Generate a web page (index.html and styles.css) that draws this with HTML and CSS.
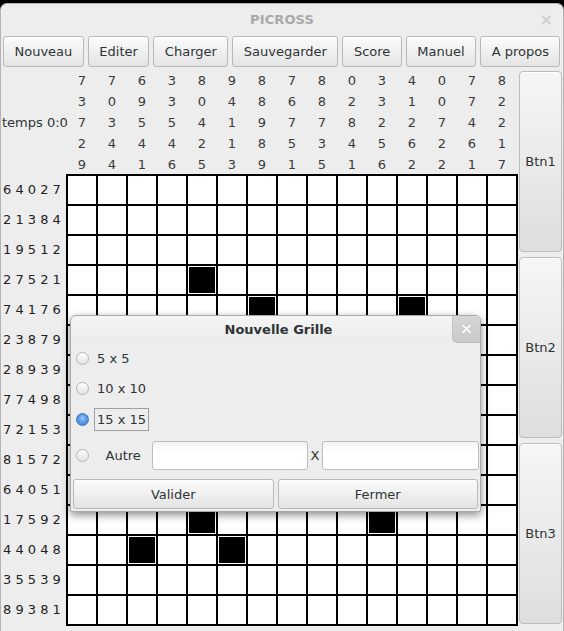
FILE: index.html
```html
<!DOCTYPE html>
<html lang="fr">
<head>
<meta charset="utf-8">
<title>PICROSS</title>
<link rel="stylesheet" href="styles.css">
</head>
<body>
<div class="window">
  <div class="titlebar">
    <span class="title">PICROSS</span>
    <span class="wclose">×</span>
  </div>
  <div class="toolbar">
    <button class="btn">Nouveau</button>
    <button class="btn">Editer</button>
    <button class="btn">Charger</button>
    <button class="btn">Sauvegarder</button>
    <button class="btn">Score</button>
    <button class="btn">Manuel</button>
    <button class="btn">A propos</button>
  </div>
  <div class="main">
    <div class="board">
      <div class="timer">temps 0:0</div>
      <div class="colclues">
        <span>7</span><span>7</span><span>6</span><span>3</span><span>8</span><span>9</span><span>8</span><span>7</span><span>8</span><span>0</span><span>3</span><span>4</span><span>0</span><span>7</span><span>8</span>
        <span>3</span><span>0</span><span>9</span><span>3</span><span>0</span><span>4</span><span>8</span><span>6</span><span>8</span><span>2</span><span>3</span><span>1</span><span>0</span><span>7</span><span>2</span>
        <span>7</span><span>3</span><span>5</span><span>5</span><span>4</span><span>1</span><span>9</span><span>7</span><span>7</span><span>8</span><span>2</span><span>2</span><span>7</span><span>4</span><span>2</span>
        <span>2</span><span>4</span><span>4</span><span>4</span><span>2</span><span>1</span><span>8</span><span>5</span><span>3</span><span>4</span><span>5</span><span>6</span><span>2</span><span>6</span><span>1</span>
        <span>9</span><span>4</span><span>1</span><span>6</span><span>5</span><span>3</span><span>9</span><span>1</span><span>5</span><span>1</span><span>6</span><span>2</span><span>2</span><span>1</span><span>7</span>
      </div>
      <div class="rowclues">
        <div>6 4 0 2 7</div>
        <div>2 1 3 8 4</div>
        <div>1 9 5 1 2</div>
        <div>2 7 5 2 1</div>
        <div>7 4 1 7 6</div>
        <div>2 3 8 7 9</div>
        <div>2 8 9 3 9</div>
        <div>7 7 4 9 8</div>
        <div>7 2 1 5 3</div>
        <div>8 1 5 7 2</div>
        <div>6 4 0 5 1</div>
        <div>1 7 5 9 2</div>
        <div>4 4 0 4 8</div>
        <div>3 5 5 3 9</div>
        <div>8 9 3 8 1</div>
      </div>
      <div class="grid">
        <span class="c"></span><span class="c"></span><span class="c"></span><span class="c"></span><span class="c"></span><span class="c"></span><span class="c"></span><span class="c"></span><span class="c"></span><span class="c"></span><span class="c"></span><span class="c"></span><span class="c"></span><span class="c"></span><span class="c"></span>
        <span class="c"></span><span class="c"></span><span class="c"></span><span class="c"></span><span class="c"></span><span class="c"></span><span class="c"></span><span class="c"></span><span class="c"></span><span class="c"></span><span class="c"></span><span class="c"></span><span class="c"></span><span class="c"></span><span class="c"></span>
        <span class="c"></span><span class="c"></span><span class="c"></span><span class="c"></span><span class="c"></span><span class="c"></span><span class="c"></span><span class="c"></span><span class="c"></span><span class="c"></span><span class="c"></span><span class="c"></span><span class="c"></span><span class="c"></span><span class="c"></span>
        <span class="c"></span><span class="c"></span><span class="c"></span><span class="c"></span><span class="c on"></span><span class="c"></span><span class="c"></span><span class="c"></span><span class="c"></span><span class="c"></span><span class="c"></span><span class="c"></span><span class="c"></span><span class="c"></span><span class="c"></span>
        <span class="c"></span><span class="c"></span><span class="c"></span><span class="c"></span><span class="c"></span><span class="c"></span><span class="c on"></span><span class="c"></span><span class="c"></span><span class="c"></span><span class="c"></span><span class="c on"></span><span class="c"></span><span class="c"></span><span class="c"></span>
        <span class="c"></span><span class="c"></span><span class="c"></span><span class="c"></span><span class="c"></span><span class="c"></span><span class="c"></span><span class="c"></span><span class="c"></span><span class="c"></span><span class="c"></span><span class="c"></span><span class="c"></span><span class="c"></span><span class="c"></span>
        <span class="c"></span><span class="c"></span><span class="c"></span><span class="c"></span><span class="c"></span><span class="c"></span><span class="c"></span><span class="c"></span><span class="c"></span><span class="c"></span><span class="c"></span><span class="c"></span><span class="c"></span><span class="c"></span><span class="c"></span>
        <span class="c"></span><span class="c"></span><span class="c"></span><span class="c"></span><span class="c"></span><span class="c"></span><span class="c"></span><span class="c"></span><span class="c"></span><span class="c"></span><span class="c"></span><span class="c"></span><span class="c"></span><span class="c"></span><span class="c"></span>
        <span class="c"></span><span class="c"></span><span class="c"></span><span class="c"></span><span class="c"></span><span class="c"></span><span class="c"></span><span class="c"></span><span class="c"></span><span class="c"></span><span class="c"></span><span class="c"></span><span class="c"></span><span class="c"></span><span class="c"></span>
        <span class="c"></span><span class="c"></span><span class="c"></span><span class="c"></span><span class="c"></span><span class="c"></span><span class="c"></span><span class="c"></span><span class="c"></span><span class="c"></span><span class="c"></span><span class="c"></span><span class="c"></span><span class="c"></span><span class="c"></span>
        <span class="c"></span><span class="c"></span><span class="c"></span><span class="c"></span><span class="c"></span><span class="c"></span><span class="c"></span><span class="c"></span><span class="c"></span><span class="c"></span><span class="c"></span><span class="c"></span><span class="c"></span><span class="c"></span><span class="c"></span>
        <span class="c"></span><span class="c"></span><span class="c"></span><span class="c"></span><span class="c on"></span><span class="c"></span><span class="c"></span><span class="c"></span><span class="c"></span><span class="c"></span><span class="c on"></span><span class="c"></span><span class="c"></span><span class="c"></span><span class="c"></span>
        <span class="c"></span><span class="c"></span><span class="c on"></span><span class="c"></span><span class="c"></span><span class="c on"></span><span class="c"></span><span class="c"></span><span class="c"></span><span class="c"></span><span class="c"></span><span class="c"></span><span class="c"></span><span class="c"></span><span class="c"></span>
        <span class="c"></span><span class="c"></span><span class="c"></span><span class="c"></span><span class="c"></span><span class="c"></span><span class="c"></span><span class="c"></span><span class="c"></span><span class="c"></span><span class="c"></span><span class="c"></span><span class="c"></span><span class="c"></span><span class="c"></span>
        <span class="c"></span><span class="c"></span><span class="c"></span><span class="c"></span><span class="c"></span><span class="c"></span><span class="c"></span><span class="c"></span><span class="c"></span><span class="c"></span><span class="c"></span><span class="c"></span><span class="c"></span><span class="c"></span><span class="c"></span>
      </div>
    </div>
    <div class="side">
      <button class="sbtn">Btn1</button>
      <button class="sbtn">Btn2</button>
      <button class="sbtn">Btn3</button>
    </div>
  </div>
</div>

<div class="dialog">
  <div class="dtitle">Nouvelle Grille<span class="dclose">×</span></div>
  <div class="dbody">
    <div class="opt"><span class="radio"></span><span class="olabel">5 x 5</span></div>
    <div class="opt"><span class="radio"></span><span class="olabel">10 x 10</span></div>
    <div class="opt"><span class="radio checked"></span><span class="olabel focus">15 x 15</span></div>
    <div class="other">
      <span class="radio"></span>
      <span class="otext">Autre</span>
      <span class="field f1"></span>
      <span class="xsep">X</span>
      <span class="field f2"></span>
    </div>
    <div class="dbuttons">
      <button class="btn dbtn">Valider</button>
      <button class="btn dbtn">Fermer</button>
    </div>
  </div>
</div>
</body>
</html>
```

FILE: styles.css
```css
* {
  box-sizing: border-box;
}

html, body {
  margin: 0;
  padding: 0;
  background: #000;
  width: 564px;
  height: 631px;
  overflow: hidden;
  font-family: "DejaVu Sans", sans-serif;
  font-size: 13px;
  color: #2e3436;
}

.window {
  margin-top: 3px;
  height: 628px;
  background: #ededed;
  border: 1px solid #b4b4b4;
  border-bottom: none;
  border-radius: 7px 7px 0 0;
  overflow: hidden;
}

.titlebar {
  height: 30px;
  display: flex;
  align-items: center;
  justify-content: center;
  position: relative;
}

.title {
  font-weight: bold;
  font-size: 13px;
  color: #a9a9a9;
  letter-spacing: 0.1px;
}

.wclose {
  position: absolute;
  right: 10px;
  top: 6px;
  font-size: 16px;
  font-weight: bold;
  color: #cfcfcf;
}

.toolbar {
  display: flex;
  gap: 4px;
  padding: 2px 0 0 2px;
}

.btn {
  height: 31px;
  padding: 0 10.5px;
  font-family: "DejaVu Sans", sans-serif;
  font-size: 13px;
  color: #2e3436;
  border: 1px solid #b9b9b9;
  border-radius: 3px;
  background: linear-gradient(#fbfbfb, #e4e4e4);
  box-shadow: inset 0 1px 0 #fff;
}

.main {
  display: flex;
}

.board {
  display: grid;
  grid-template-columns: 65px 452px;
  grid-template-rows: 107px 452px;
}

.timer {
  padding: 45px 0 0 1px;
  line-height: 21px;
  white-space: nowrap;
}

.colclues {
  display: grid;
  grid-template-columns: repeat(15, 30px);
  grid-auto-rows: 21px;
  padding: 3px 0 0 1px;
  line-height: 21px;
  justify-items: center;
  color: #3b3b3b;
}

.rowclues {
  padding: 1px 0 0 2px;
}

.rowclues div {
  height: 30px;
  line-height: 30px;
  white-space: nowrap;
  color: #222;
}

.grid {
  display: grid;
  grid-template-columns: repeat(15, 30px);
  grid-auto-rows: 30px;
  border: 1px solid #000;
  background: #fff;
}

.c {
  border: 1px solid #000;
  background: #fff;
}

.c.on {
  background: #000;
  box-shadow: inset 0 0 0 1px #fff;
}

.side {
  display: flex;
  flex-direction: column;
  gap: 5px;
  padding-top: 4px;
  margin-left: 1px;
}

.sbtn {
  width: 43px;
  height: 181px;
  padding: 0;
  font-family: "DejaVu Sans", sans-serif;
  font-size: 13px;
  color: #2e3436;
  border: 1px solid #bcbcbc;
  border-radius: 4px;
  background: linear-gradient(#f6f6f6, #dedede);
  box-shadow: inset 0 1px 0 #fff;
}

/* dialog */
.dialog {
  position: absolute;
  left: 70px;
  top: 315px;
  width: 411px;
  background: #ededed;
  border: 1px solid #a9a9a9;
  border-radius: 6px 6px 2px 2px;
  box-shadow: 0 3px 9px rgba(0, 0, 0, 0.45);
}

.dtitle {
  position: relative;
  height: 27px;
  line-height: 28px;
  text-align: center;
  font-weight: bold;
  padding-left: 6px;
  color: #2e3436;
  border-radius: 6px 6px 0 0;
  background: linear-gradient(#f4f4f4, #ececec);
}

.dclose {
  position: absolute;
  right: 0;
  top: 0;
  width: 28px;
  height: 27px;
  line-height: 25px;
  text-align: center;
  font-size: 16px;
  font-weight: bold;
  color: #fff;
  text-shadow: 0 0 1px #9a9a9a;
  background: linear-gradient(#d6d6d6, #c9c9c9);
  border-left: 1px solid #c2c2c2;
  border-bottom: 1px solid #bdbdbd;
  border-radius: 0 5px 0 5px;
}

.dbody {
  display: flex;
  flex-direction: column;
  padding: 0 0 2px 0;
}

.opt {
  height: 30.5px;
  display: flex;
  align-items: center;
  padding-left: 5px;
}

.radio {
  width: 13px;
  height: 13px;
  flex: 0 0 13px;
  border-radius: 50%;
  border: 1px solid #b3b3b3;
  background: linear-gradient(#ffffff, #e2e2e2);
}

.radio.checked {
  border-color: #3a77c0;
  background: radial-gradient(circle at 50% 40%, #9cc6f3 0, #5b9be4 45%, #3d7dd0 100%);
}

.olabel {
  margin-left: 5px;
  padding: 0 2px;
  border: 1px solid transparent;
  line-height: 21px;
}

.olabel.focus {
  border-color: #a0a0a0;
}

.other {
  display: flex;
  align-items: center;
  height: 29px;
  margin-top: 6.5px;
  padding: 0 1px 0 5px;
}

.otext {
  width: 46px;
  margin-left: 16.5px;
  flex: 0 0 46px;
}

.field {
  height: 29px;
  background: linear-gradient(#f4f4f4, #ffffff 40%);
  border: 1px solid #bdbdbd;
  border-radius: 3px;
}

.f1 {
  flex: 0 0 156px;
}

.xsep {
  margin: 0 3px;
}

.f2 {
  flex: 1;
}

.dbuttons {
  display: flex;
  gap: 4px;
  padding: 0 2px;
  margin-top: 9px;
}

.dbtn {
  flex: 1;
  height: 30px;
}
```
